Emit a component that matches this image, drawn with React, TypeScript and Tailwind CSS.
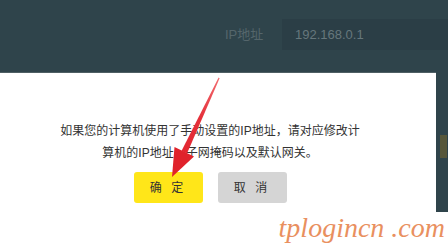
import React from 'react';

const cjk = { fontFamily: '"Liberation Sans", "Noto Sans CJK SC", sans-serif' };

function Arrow() {
  return (
    <svg className="absolute left-0 top-0 pointer-events-none" width="448" height="252" viewBox="0 0 448 252">
      <defs>
        <linearGradient id="ar" x1="219" y1="78" x2="172" y2="177" gradientUnits="userSpaceOnUse">
          <stop offset="0" stopColor="#f26a6e" />
          <stop offset="0.4" stopColor="#e5303a" />
          <stop offset="1" stopColor="#e0222b" />
        </linearGradient>
      </defs>
      <polygon points="218.6,77.6 219.6,78.2 187,153.5 181.5,151" fill="url(#ar)" />
      <polygon points="172,177 174.5,147 194,156.5" fill="#e0222b" />
    </svg>
  );
}

export default function App() {
  return (
    <div className="relative w-[448px] h-[252px] overflow-hidden bg-white" style={cjk}>
      <div className="h-[72px] bg-[#2f444b] flex items-start">
        <div className="ml-[225px] w-[57px] mt-[27px] text-[13px] text-[#55666b] leading-[16px]">IP地址</div>
        <div className="mt-[19px] flex-1 h-[31px] bg-[#2b3e46] flex items-center pl-[13px] text-[13px] text-[#66777c]">
          192.168.0.1
        </div>
      </div>
      <div className="flex h-[140px]">
        <div className="flex-1 border-t border-[#4f5f64] flex flex-col items-center pr-4 pt-[47px]">
          <p className="text-[12px] leading-[22px] text-[#333] text-center">
            如果您的计算机使用了手动设置的IP地址，请对应修改计
            <br />
            算机的IP地址、子网掩码以及默认网关。
          </p>
          <div className="mt-[8px] flex gap-[15px]">
            <button className="w-[69px] h-[31px] rounded-[3px] bg-[#ffe619] text-[12px] text-[#333] tracking-[3px]">确 定</button>
            <button className="w-[69px] h-[31px] rounded-[3px] bg-[#d5d5d5] text-[12px] text-[#333] tracking-[3px]">取 消</button>
          </div>
        </div>
        <div className="w-[12px] bg-[#2f444b] pt-[63px] pl-[4px]">
          <div className="w-[7px] h-[23px] bg-[#57573a]" />
        </div>
      </div>
      <div className="flex justify-end pr-[3px]">
        <span
          className="italic text-[28px] leading-[32px] text-[#e9905f]"
          style={{ fontFamily: '"Liberation Serif", serif' }}
        >
          tplogincn .com
        </span>
      </div>
      <Arrow />
    </div>
  );
}
